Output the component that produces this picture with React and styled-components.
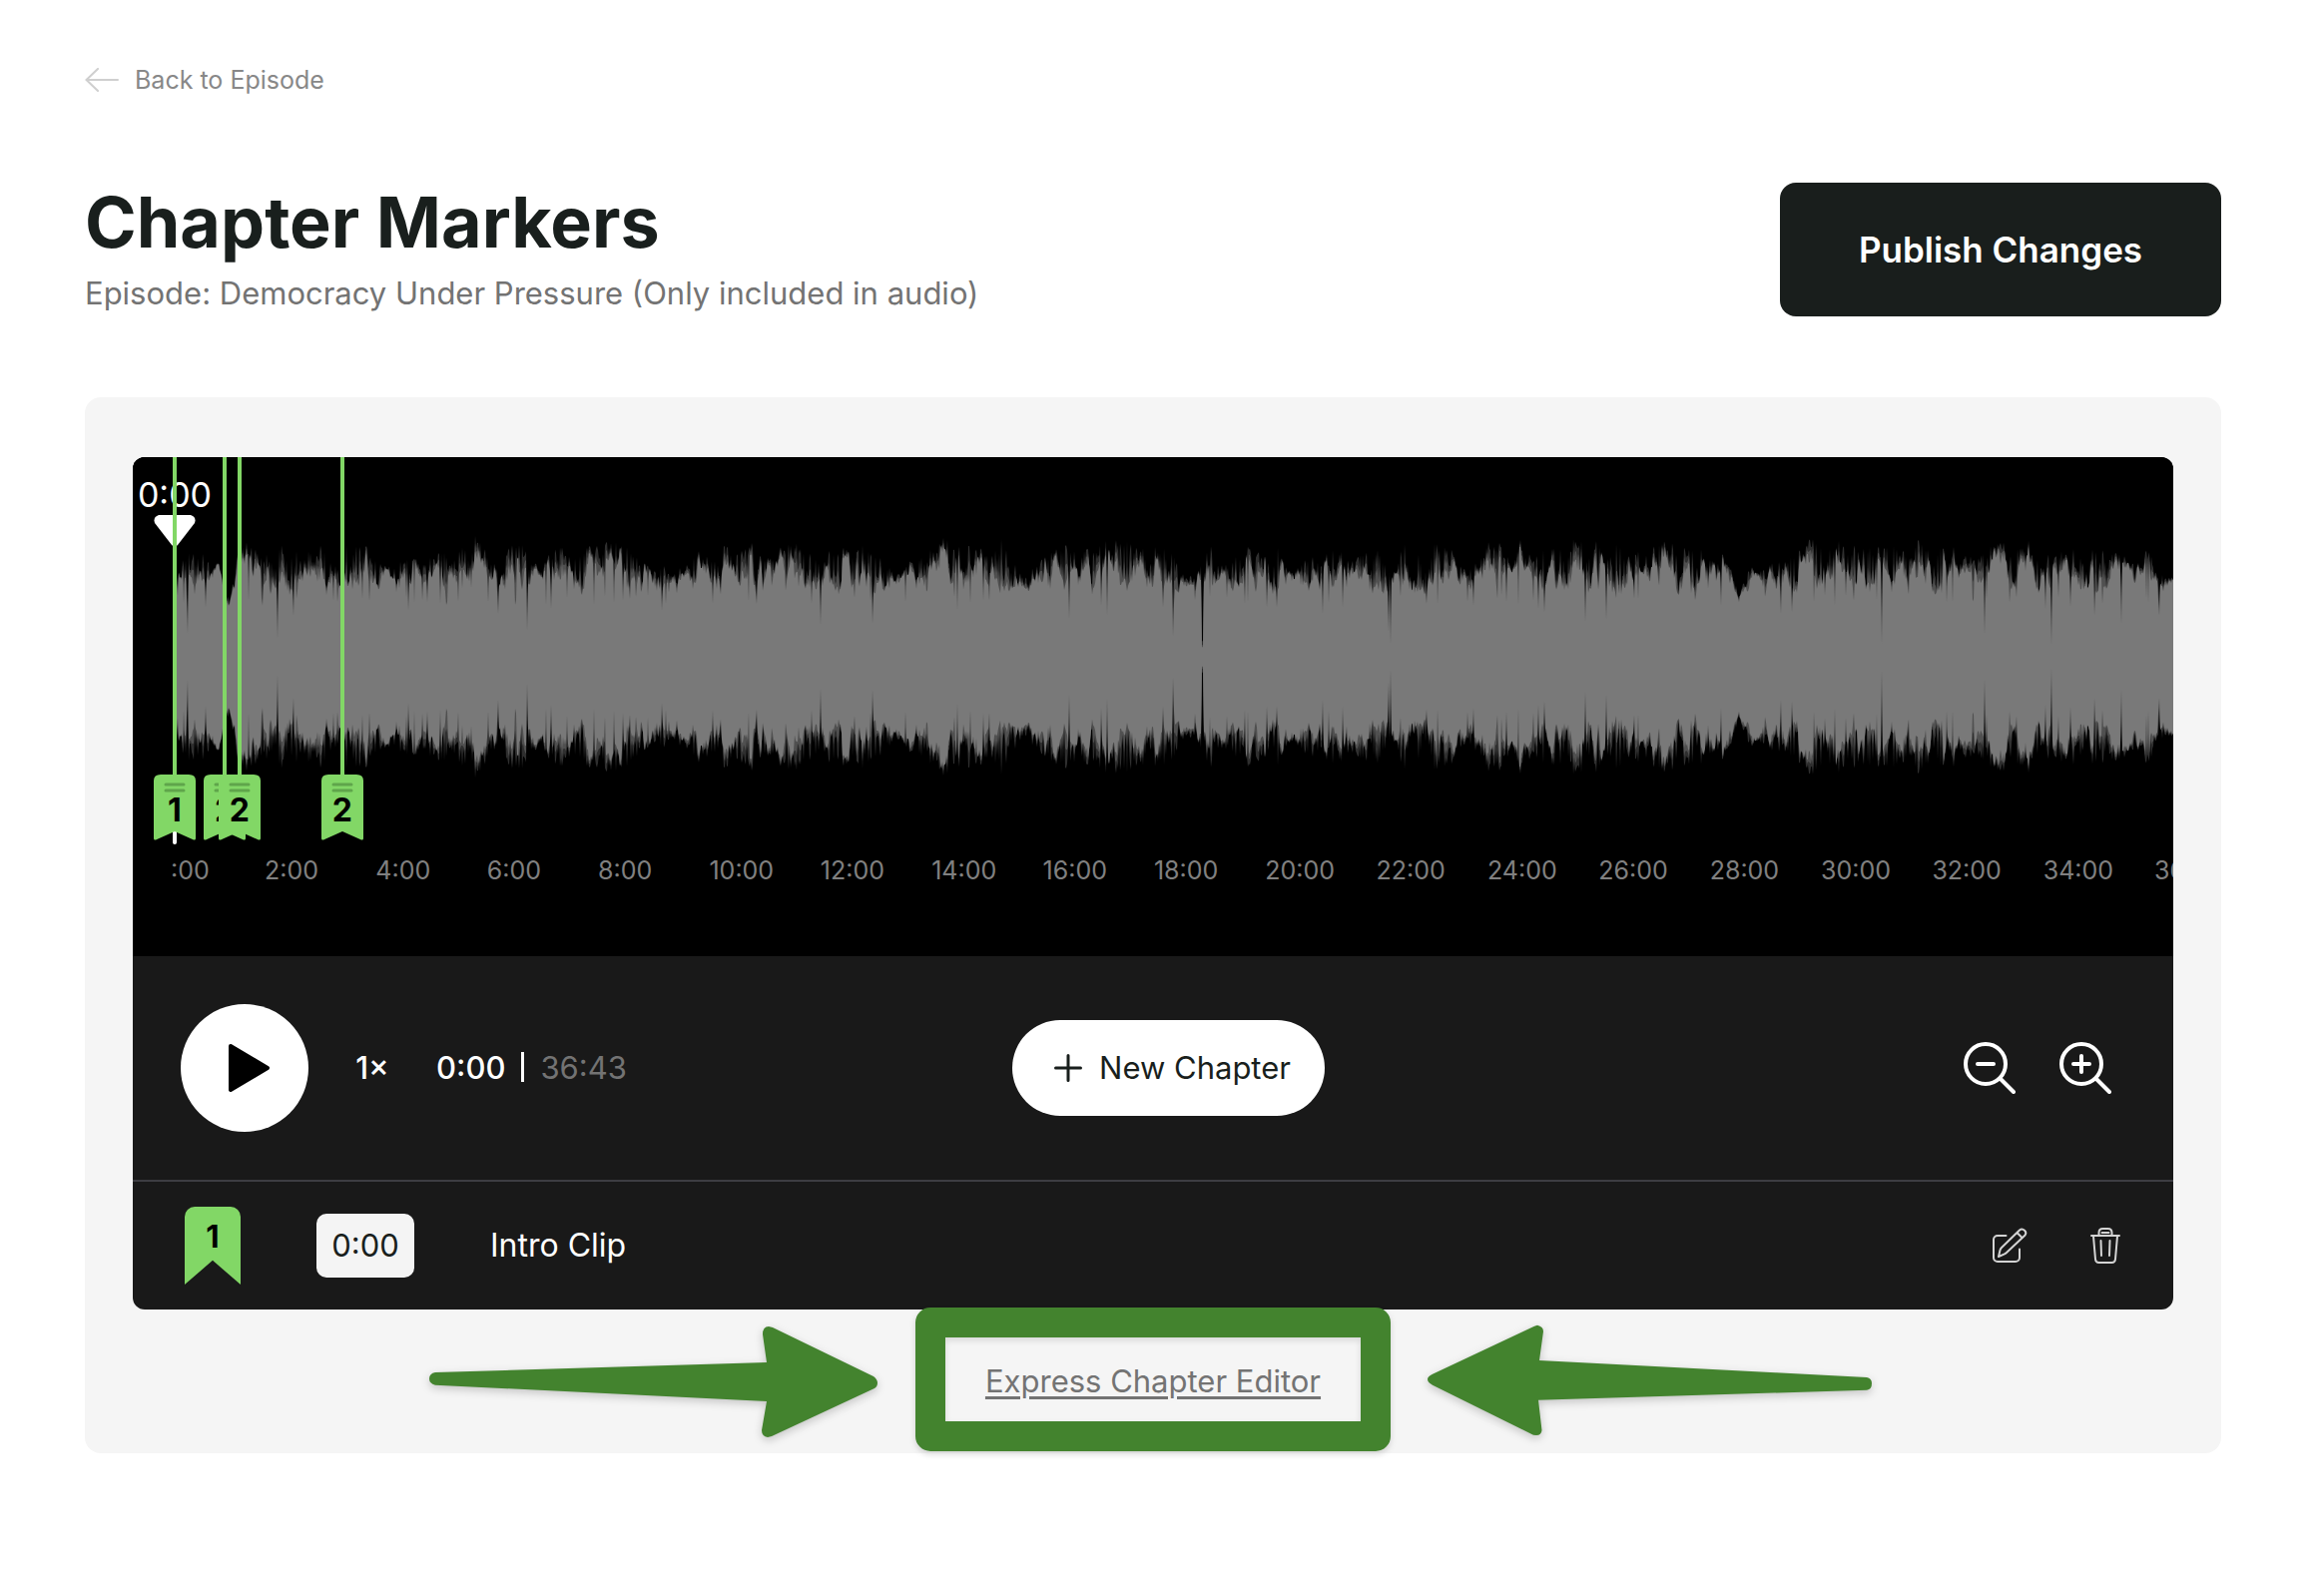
import React, { useMemo, useState } from 'react'
import styled, { createGlobalStyle } from 'styled-components'

// seconds of audio visible in the timeline
const VISIBLE = 2159

const markers = [
  { time: 0, number: 1 },
  { time: 54, number: 2 },
  { time: 70, number: 2 },
  { time: 181, number: 2 },
]

const ticks = Array.from({ length: 17 }, (_, i) => `${(i + 1) * 2}:00`)

// loudness overview, stored as two tiles of x, y pairs (y runs down, 474 is silence)
const tiles = [
  {
    start: -45,
    scale: 1.522,
    peaks: [68, 185, 75, 170, 110, 160, 135, 175, 145, 290, 152, 300, 160, 220, 165, 135, 180, 130, 200, 175, 215, 145, 237, 132, 265, 170, 292, 138, 305, 195, 322, 210, 328, 140, 355, 140, 372, 160, 390, 205, 410, 190, 430, 170, 450, 195, 475, 150, 490, 200, 505, 140, 528, 112, 545, 165, 560, 210, 580, 138, 600, 145, 615, 200, 630, 185, 650, 150, 665, 150, 685, 138, 705, 150, 725, 125, 742, 122, 765, 160, 790, 200, 820, 190, 845, 215, 865, 150, 880, 175, 905, 145, 925, 165, 945, 125, 965, 175, 985, 160, 1010, 122, 1030, 145, 1050, 185, 1075, 150, 1095, 150, 1120, 130, 1140, 132, 1155, 180, 1165, 240, 1190, 190, 1210, 180, 1235, 122, 1255, 130, 1275, 150, 1297, 110, 1310, 185, 1330, 122, 1350, 200, 1365, 240, 1385, 190, 1410, 160, 1425, 140, 1450, 150, 1470, 155, 1490, 130, 1518, 120, 1540, 155],
    dips: [73, 290, 89, 405, 116, 325, 150, 320, 203, 320, 225, 420, 249, 350, 424, 335, 453, 310, 474, 315, 561, 345, 605, 395, 642, 330, 752, 305, 811, 335, 956, 315, 1053, 380, 1132, 375, 1261, 335, 1301, 305, 1432, 360, 1481, 320, 1490, 350],
  },
  {
    start: 975,
    scale: 1.508,
    peaks: [5, 130, 15, 145, 33, 145, 50, 225, 70, 235, 94, 140, 105, 205, 125, 165, 140, 180, 155, 135, 170, 170, 185, 145, 200, 145, 215, 225, 240, 180, 255, 170, 275, 160, 300, 150, 318, 155, 335, 165, 355, 135, 370, 230, 385, 135, 405, 165, 418, 145, 442, 135, 460, 150, 475, 215, 490, 215, 512, 130, 525, 140, 540, 130, 550, 220, 563, 122, 580, 180, 600, 130, 620, 145, 640, 125, 660, 120, 680, 135, 697, 180, 711, 125, 725, 175, 740, 155, 765, 140, 785, 125, 800, 150, 820, 145, 837, 145, 850, 185, 868, 165, 880, 210, 892, 290, 907, 200, 920, 220, 935, 210, 952, 170, 965, 180, 985, 150, 998, 125, 1010, 130, 1030, 130, 1053, 130, 1078, 140, 1107, 150, 1132, 140, 1150, 180, 1166, 118, 1185, 150, 1213, 145, 1240, 180, 1260, 160, 1278, 140, 1292, 135, 1310, 160, 1332, 120, 1350, 215, 1362, 150, 1380, 155, 1400, 155, 1415, 190, 1430, 145, 1445, 130, 1465, 170, 1480, 180, 1500, 195, 1512, 138, 1525, 230, 1550, 235],
    dips: [22, 325, 37, 412, 81, 445, 83, 445, 146, 315, 180, 325, 195, 325, 264, 345, 294, 325, 364, 400, 366, 437, 420, 315, 491, 320, 542, 310, 590, 330, 598, 340, 661, 370, 692, 362, 735, 300, 865, 320, 892, 310, 956, 345, 973, 340, 1022, 290, 1038, 320, 1109, 435, 1264, 408, 1355, 330, 1364, 440, 1394, 325, 1430, 350, 1471, 376, 1528, 350],
  },
]

const readPairs = (key) =>
  tiles.flatMap(({ start, scale, [key]: list }) => {
    const out = []
    for (let i = 0; i < list.length; i += 2) {
      out.push([start + list[i] / scale, (474 - list[i + 1]) / 3])
    }
    return out
  })

const buildWave = () => {
  const peaks = readPairs('peaks')
  const dips = new Map(readPairs('dips').map(([x, h]) => [Math.round(x), h]))
  let seed = 77
  const random = () => {
    seed = (seed * 16807) % 2147483647
    return seed / 2147483647
  }

  const inner = []
  const middle = []
  const outer = []
  let p = 0
  // slow noise that gives the rounded bumps between the spikes
  let knot = { from: 0, to: 4, a: 0.5, b: 0.5 }
  for (let x = 0; x <= 2002; x++) {
    while (p < peaks.length - 2 && peaks[p + 1][0] < x) p++
    if (x >= knot.to) {
      knot = { from: x, to: x + 2 + Math.floor(random() * 5), a: knot.b, b: random() }
    }
    const bump = knot.a + ((knot.b - knot.a) * (x - knot.from)) / (knot.to - knot.from)
    const [x0, h0] = peaks[p]
    const [x1, h1] = peaks[p + 1]
    const t = Math.min(1, Math.max(0, (x - x0) / (x1 - x0)))
    const cap = (h0 + (h1 - h0) * t) * 1.02
    const floor = Math.min(cap * 0.86, 62 + random() * 14)
    const level = Math.min(1, Math.max(0, bump * 1.05 - random() * 0.3))
    let low = floor + (cap - floor) * level * 0.9
    const high = low + (cap - low) * Math.pow(random(), 1.6)
    if (random() < 0.03) low = Math.min(low, 52 + random() * 10)
    if (dips.has(x)) {
      const dip = dips.get(x)
      inner.push(dip)
      middle.push(dip + 2)
      outer.push(dip + 6)
    } else {
      inner.push(low)
      middle.push(low + (high - low) * 0.5)
      outer.push(high)
    }
  }

  const toPath = (heights) => {
    const top = heights.map((h, x) => `${x} ${(130 - h).toFixed(1)}`)
    const bottom = heights.map((h, x) => `${x} ${(130 + h).toFixed(1)}`).reverse()
    return `M${top.join('L')}L${bottom.join('L')}Z`
  }
  return [toPath(outer), toPath(middle), toPath(inner)]
}

const ArrowLeftIcon = () => (
  <svg width="34" height="24" viewBox="0 0 34 24" fill="none" stroke="#cfcfcf" strokeWidth="2" strokeLinecap="round">
    <path d="M2 12H33M13 1L1.500 12L13 23" />
  </svg>
)

const PlayIcon = () => (
  <svg width="44" height="50" viewBox="0 0 44 50">
    <path d="M3 3L40 25L3 47Z" stroke="#000" strokeWidth="4" strokeLinejoin="round" />
  </svg>
)

const PlusIcon = () => (
  <svg width="28" height="28" viewBox="0 0 28 28" stroke="#191f1d" strokeWidth="3" strokeLinecap="round">
    <path d="M14 1.500V26.500M1.500 14H26.500" />
  </svg>
)

const ZoomIcon = ({ plus }) => (
  <svg width="52" height="52" viewBox="0 0 52 52" fill="none" stroke="#fff" strokeWidth="4" strokeLinecap="round">
    <circle cx="22" cy="22" r="20" />
    <path d="M36.500 36.500L50 50M14 22H30" />
    {plus && <path d="M22 14V30" />}
  </svg>
)

const EditIcon = () => (
  <svg width="36" height="36" viewBox="0 0 36 36" fill="none" stroke="#d4d4d4" strokeWidth="2" strokeLinecap="round" strokeLinejoin="round">
    <path d="M14.500 8H6a4 4 0 0 0-4 4v18a4 4 0 0 0 4 4h18a4 4 0 0 0 4-4V21.500" />
    <path d="M7 29l1.500-6.500q.5-1.500 1.500-2.500L28 2.500q2.500-2 5 .3t.3 5L15 25q-1 1-2.500 1.600z" />
    <path d="M26 5.500l4.500 4.500" />
  </svg>
)

const TrashIcon = () => (
  <svg width="30" height="36" viewBox="0 0 30 36" fill="none" stroke="#d4d4d4" strokeWidth="2" strokeLinecap="round" strokeLinejoin="round">
    <path d="M1 8H29M8.500 7.500V5q0-4 4-4h5q4 0 4 4v2.500M11.500 5h7" />
    <path d="M3 8.500L5 31.500q.3 3.500 3.500 3.500h13q3.200 0 3.500-3.500L27 8.500" />
    <path d="M10.500 13L11 28M19.500 13L19 28" />
  </svg>
)

const FlagShape = () => (
  <svg width="42" height="66" viewBox="0 0 42 66">
    <path d="M0 6q0-6 7-6h28q7 0 7 6v58q0 2-2 1.500L21 57L2 65.500Q0 66 0 64z" fill="#82d766" />
    <path d="M12 10H30M12 16H30" stroke="#5fa54b" strokeWidth="3" strokeLinecap="round" />
  </svg>
)

const PointerRight = () => (
  <PointerSvg width="450" viewBox="0 0 450 144">
    <path d="M6 63L338 53L334 25Q334 17 340 17L344 18L445 67Q449 70 449 73.500Q449 77 446 79L343 127L339 128Q333 127 333 121L338 92L6 75.700Q0 74 0 69.500Q0 64 6 63Z" />
  </PointerSvg>
)

const PointerLeft = () => (
  <PointerSvg width="446" viewBox="0 0 446 144">
    <path d="M5 64.700L107 16.700L110 15.700Q116 17 116 22L112 51L440 68Q445 69 445 74Q445 80 440 80.700L111 90.700L114.500 121Q114 126 109 126L106 125.700L5 75.700Q0 73 0 70Q0 67 5 64.700Z" />
  </PointerSvg>
)

const App = () => {
  const [start, setStart] = useState('0:00')
  const wave = useMemo(buildWave, [])

  return (
    <Page>
      <GlobalStyle />
      <BackLink href="#episode">
        <ArrowLeftIcon />
        Back to Episode
      </BackLink>

      <Header>
        <div>
          <Title>Chapter Markers</Title>
          <Subtitle>Episode: Democracy Under Pressure (Only included in audio)</Subtitle>
        </div>
        <PublishButton type="button">Publish Changes</PublishButton>
      </Header>

      <Panel>
        <Player>
          <Timeline>
            <Wave viewBox="0 0 2002 260" preserveAspectRatio="none" aria-hidden="true">
              <path d={wave[0]} fill="#2f2f2f" />
              <path d={wave[1]} fill="#505050" />
              <path d={wave[2]} fill="#797979" />
            </Wave>
            <Playhead>
              <PlayheadTime>0:00</PlayheadTime>
              <svg width="42" height="32" viewBox="0 0 42 32">
                <path d="M5 0H37q6 2 4 8L24 30q-3 3-6 0L1 8Q-1 2 5 0Z" fill="#fff" />
              </svg>
              <PlayheadLine />
            </Playhead>
            {markers.map(({ time, number }) => (
              <Marker key={time} style={{ left: `${(time / VISIBLE) * 100}%` }}>
                <MarkerLine />
                <FlagShape />
                <MarkerNumber>{number}</MarkerNumber>
              </Marker>
            ))}
          </Timeline>
          <Ticks>
            <FirstTick>:00</FirstTick>
            {ticks.map((tick) => (
              <Tick key={tick}>{tick}</Tick>
            ))}
            <LastTick>36:00</LastTick>
          </Ticks>

          <Controls>
            <ControlsLeft>
              <PlayButton type="button" aria-label="Play">
                <PlayIcon />
              </PlayButton>
              <SpeedButton type="button">1×</SpeedButton>
              <Time>
                0:00
                <Divider />
                <Duration>36:43</Duration>
              </Time>
            </ControlsLeft>
            <NewChapter type="button">
              <PlusIcon />
              <span>New Chapter</span>
            </NewChapter>
            <ControlsRight>
              <IconButton type="button" aria-label="Zoom out">
                <ZoomIcon />
              </IconButton>
              <IconButton type="button" aria-label="Zoom in">
                <ZoomIcon plus />
              </IconButton>
            </ControlsRight>
          </Controls>

          <Chapter>
            <Bookmark>1</Bookmark>
            <StartInput aria-label="Chapter start" value={start} onChange={(e) => setStart(e.target.value)} />
            <ChapterName>Intro Clip</ChapterName>
            <IconButton type="button" aria-label="Edit chapter">
              <EditIcon />
            </IconButton>
            <IconButton type="button" aria-label="Delete chapter">
              <TrashIcon />
            </IconButton>
          </Chapter>
        </Player>

        <Footer>
          <PointerRight />
          <Highlight>
            <ExpressLink href="#express">Express Chapter Editor</ExpressLink>
          </Highlight>
          <PointerLeft />
        </Footer>
      </Panel>
    </Page>
  )
}

export default App

const GlobalStyle = createGlobalStyle`
  *{
    box-sizing: border-box;
  }
  body{
    margin: 0;
    background: #fff;
    color: #191f1d;
    font-family: Inter, sans-serif;
    font-size: 31px;
  }
  button, input{
    font: inherit;
    border: none;
    padding: 0;
  }
  button{
    cursor: pointer;
  }
  svg{
    display: block;
    flex: none;
  }
`

const Page = styled.main`
  padding: 60px 103px 120px 85px;
`

const BackLink = styled.a`
  display: inline-flex;
  align-items: center;
  gap: 16px;
  height: 40px;
  font-size: 25px;
  color: #888;
  text-decoration: none;
`

const Header = styled.header`
  display: flex;
  justify-content: space-between;
  align-items: flex-start;
  margin: 83px 0 73px;
`

const Title = styled.h1`
  margin: 0;
  font-size: 70px;
  line-height: 80px;
  font-weight: 700;
`

const Subtitle = styled.p`
  margin: 0;
  line-height: 62px;
  color: #737373;
`

const PublishButton = styled.button`
  width: 442px;
  height: 134px;
  border-radius: 16px;
  background: #191e1c;
  color: #fff;
  font-size: 35px;
  font-weight: 600;
`

const Panel = styled.section`
  padding: 60px 48px 0;
  border-radius: 16px;
  background: #f5f5f5;
`

const Player = styled.div`
  border-radius: 12px;
  background: #191919;
  color: #fff;
  overflow: hidden;
`

const Timeline = styled.div`
  position: relative;
  height: 390px;
  padding-top: 70px;
  border-left: 42px solid #000;
  background: #000;
`

const Wave = styled.svg`
  width: 100%;
  height: 260px;
`

const Playhead = styled.div`
  position: absolute;
  top: 18px;
  left: 0;
  width: 84px;
  margin-left: -42px;
  height: 370px;
  display: flex;
  flex-direction: column;
  align-items: center;
`

const PlayheadTime = styled.span`
  font-size: 34px;
  line-height: 40px;
`

const PlayheadLine = styled.span`
  flex: 1;
  width: 4px;
  border-radius: 2px;
  background: #fff;
`

const Marker = styled.div`
  position: absolute;
  top: 0;
  width: 42px;
  margin-left: -21px;
  display: flex;
  flex-direction: column;
  align-items: center;
`

const MarkerLine = styled.span`
  width: 4px;
  height: 318px;
  background: #82d766;
`

const MarkerNumber = styled.span`
  position: absolute;
  bottom: 12px;
  color: #000;
  font-size: 32px;
  line-height: 36px;
  font-weight: 700;
`

const Ticks = styled.div`
  display: flex;
  height: 110px;
  padding: 6px 0 0 38px;
  background: #000;
  color: #808080;
  font-size: 25px;
  line-height: 36px;
  overflow: hidden;
`

const Tick = styled.span`
  flex: 1 1 0;
`

const FirstTick = styled.span`
  width: 94px;
`

const LastTick = styled.span`
  width: 19px;
`

const Controls = styled.div`
  display: grid;
  grid-template-columns: 1fr auto 1fr;
  align-items: center;
  height: 224px;
  padding: 0 17px 0 48px;
`

const ControlsLeft = styled.div`
  display: flex;
  align-items: center;
`

const PlayButton = styled.button`
  display: flex;
  align-items: center;
  justify-content: center;
  width: 128px;
  height: 128px;
  padding-left: 10px;
  border-radius: 50%;
  background: #fff;
`

const SpeedButton = styled.button`
  width: 128px;
  padding-bottom: 2px;
  background: none;
  color: #fff;
  font-weight: 500;
`

const Time = styled.span`
  display: flex;
  align-items: center;
  padding-bottom: 2px;
  font-weight: 500;
`

const Divider = styled.span`
  width: 3px;
  height: 30px;
  margin: 0 16px;
  background: #fff;
`

const Duration = styled.span`
  color: #737373;
  font-weight: 400;
`

const NewChapter = styled.button`
  display: flex;
  align-items: center;
  justify-content: center;
  gap: 17px;
  width: 313px;
  height: 96px;
  padding-left: 8px;
  border-radius: 48px;
  background: #fff;
  color: #191f1d;

  span{
    padding-bottom: 2px;
  }
`

const ControlsRight = styled.div`
  display: flex;
  justify-content: flex-end;
  padding-right: 23px;
`

const IconButton = styled.button`
  display: flex;
  align-items: center;
  justify-content: center;
  width: 96px;
  height: 64px;
  background: none;
`

const Chapter = styled.div`
  display: flex;
  align-items: center;
  height: 130px;
  padding: 0 20px 0 52px;
  border-top: 2px solid #3d3d42;
`

const Bookmark = styled.span`
  width: 56px;
  height: 78px;
  padding-top: 12px;
  border-radius: 10px 10px 0 0;
  background: #82d766;
  clip-path: polygon(0 0, 100% 0, 100% 100%, 50% 69%, 0 100%);
  color: #000;
  font-weight: 700;
  line-height: 36px;
  text-align: center;
`

const StartInput = styled.input`
  width: 98px;
  height: 64px;
  margin: 0 76px;
  padding-bottom: 2px;
  border-radius: 10px;
  background: #f4f4f4;
  color: #191f1d;
  text-align: center;
`

const ChapterName = styled.span`
  flex: 1;
  padding-bottom: 2px;
  font-size: 32px;
`

const Footer = styled.div`
  display: grid;
  grid-template-columns: 1fr auto 1fr;
  gap: 37px;
  height: 144px;
`

const PointerSvg = styled.svg`
  height: 144px;
  fill: #43832e;
  filter: drop-shadow(0 3px 4px rgba(0, 0, 0, 0.2));

  &:first-child{
    justify-self: end;
  }
`

const Highlight = styled.div`
  display: flex;
  align-items: center;
  justify-content: center;
  width: 476px;
  height: 144px;
  margin-top: -2px;
  padding-top: 2px;
  border: 30px solid #43832e;
  border-radius: 15px;
  box-shadow: 0 3px 6px rgba(0, 0, 0, 0.15), inset 0 3px 6px rgba(0, 0, 0, 0.12);
  z-index: 1;
`

const ExpressLink = styled.a`
  color: #737373;
  text-decoration: underline;
  text-decoration-thickness: 3px;
  text-underline-offset: 4px;
`
